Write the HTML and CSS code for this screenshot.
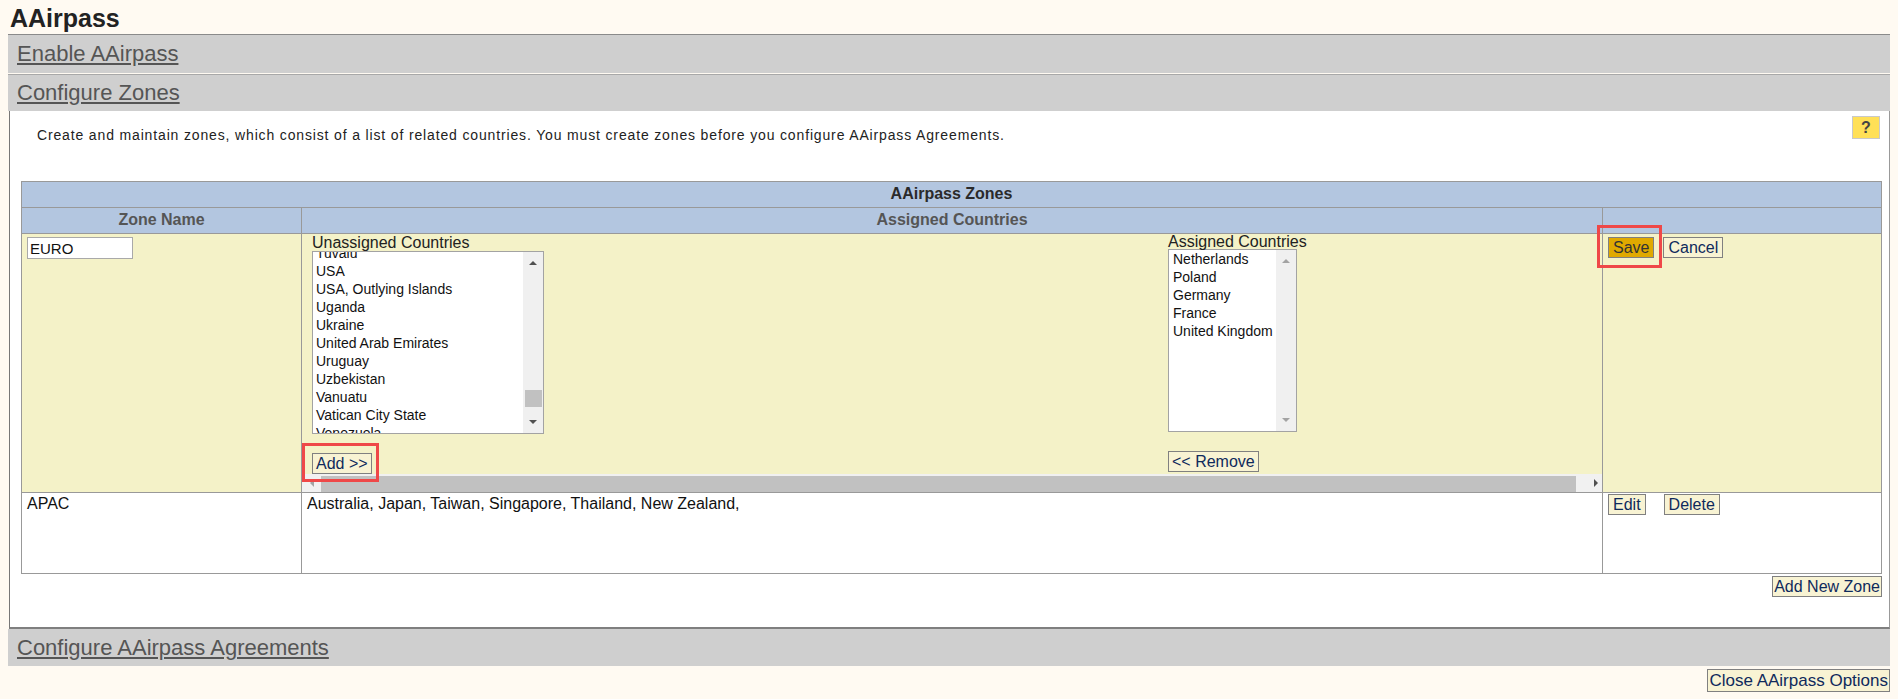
FILE: index.html
```html
<!DOCTYPE html>
<html lang="en">
<head>
<meta charset="utf-8">
<title>AAirpass</title>
<link rel="stylesheet" href="styles.css">
</head>
<body>
<h1 class="title">AAirpass</h1>
<div class="bar"><a class="bar-link" href="#">Enable AAirpass</a></div>
<div class="bar bar-second"><a class="bar-link" href="#">Configure Zones</a></div>
<div class="panel">
  <div class="intro">
    <p class="intro-text">Create and maintain zones, which consist of a list of related countries. You must create zones before you configure AAirpass Agreements.</p>
    <button class="help" type="button">?</button>
  </div>
  <table class="zones">
    <colgroup><col class="col-name"><col class="col-countries"><col class="col-actions"></colgroup>
    <thead>
      <tr class="head-main"><th colspan="3">AAirpass Zones</th></tr>
      <tr class="head-sub"><th>Zone Name</th><th>Assigned Countries</th><th></th></tr>
    </thead>
    <tbody>
      <tr class="row-edit">
        <td class="cell-name"><input class="zone-input" type="text" value="EURO"></td>
        <td class="cell-countries">
          <div class="edit-wrap">
            <div class="picker">
              <div class="pick-group pick-unassigned">
                <div class="pick-label">Unassigned Countries</div>
                <div class="listbox box-unassigned">
                  <div class="list-items list-scrolled">
                    <div class="item">Tuvalu</div>
                    <div class="item">USA</div>
                    <div class="item">USA, Outlying Islands</div>
                    <div class="item">Uganda</div>
                    <div class="item">Ukraine</div>
                    <div class="item">United Arab Emirates</div>
                    <div class="item">Uruguay</div>
                    <div class="item">Uzbekistan</div>
                    <div class="item">Vanuatu</div>
                    <div class="item">Vatican City State</div>
                    <div class="item">Venezuela</div>
                  </div>
                  <div class="vscroll">
                    <div class="arrow-box"><span class="tri-up"></span></div>
                    <div class="vtrack"><div class="vthumb"></div></div>
                    <div class="arrow-box"><span class="tri-down"></span></div>
                  </div>
                </div>
                <span class="annot annot-add"><button class="btn btn-pick" type="button">Add &gt;&gt;</button></span>
              </div>
              <div class="pick-group pick-assigned">
                <div class="pick-label label-assigned">Assigned Countries</div>
                <div class="listbox box-assigned">
                  <div class="list-items list-assigned">
                    <div class="item">Netherlands</div>
                    <div class="item">Poland</div>
                    <div class="item">Germany</div>
                    <div class="item">France</div>
                    <div class="item">United Kingdom</div>
                  </div>
                  <div class="vscroll vscroll-disabled">
                    <div class="arrow-box"><span class="tri-up"></span></div>
                    <div class="vtrack"></div>
                    <div class="arrow-box"><span class="tri-down"></span></div>
                  </div>
                </div>
                <button class="btn btn-pick" type="button">&lt;&lt; Remove</button>
              </div>
            </div>
            <div class="hscroll">
              <div class="harrow harrow-left"><span class="tri-left"></span></div>
              <div class="hthumb"></div>
              <div class="harrow harrow-right"><span class="tri-right"></span></div>
            </div>
          </div>
        </td>
        <td class="cell-actions">
          <span class="annot annot-save"><button class="btn btn-save" type="button">Save</button></span><button class="btn btn-cancel" type="button">Cancel</button>
        </td>
      </tr>
      <tr class="row-view">
        <td class="cell-text">APAC</td>
        <td class="cell-text">Australia, Japan, Taiwan, Singapore, Thailand, New Zealand,</td>
        <td class="cell-actions cell-actions-view">
          <button class="btn" type="button">Edit</button><button class="btn btn-delete" type="button">Delete</button>
        </td>
      </tr>
    </tbody>
  </table>
  <div class="table-foot"><button class="btn btn-tight" type="button">Add New Zone</button></div>
</div>
<div class="bar bar-last"><a class="bar-link" href="#">Configure AAirpass Agreements</a></div>
<div class="page-foot"><button class="btn btn-close" type="button">Close AAirpass Options</button></div>
</body>
</html>
```
FILE: styles.css
```css
html, body {
  margin: 0;
}
body {
  background: #fffaf2;
  font-family: "Liberation Sans", Arial, sans-serif;
  color: #222;
  padding: 0 8px;
}
.title {
  margin: 0;
  height: 32px;
  padding: 2px 0 0 2px;
  font-size: 25px;
  line-height: 32px;
  font-weight: bold;
  color: #222;
}
.bar {
  border-top: 1px solid #8a8a8a;
  background: #cfcfcf;
  height: 38px;
  line-height: 38px;
  padding-left: 9px;
}
.bar-second {
  margin-top: 1px;
  border-top-color: #a8a8a8;
  height: 36px;
  line-height: 36px;
}
.bar-last {
  border-top: none;
  height: 37px;
  line-height: 37px;
}
.bar-link {
  font-size: 22px;
  color: #555;
  text-decoration: underline;
}
.panel {
  margin-left: 1px;
  background: #fff;
  border-left: 1px solid #777;
  border-right: 1px solid #999;
  border-bottom: 2px solid #7f7f7f;
  padding: 0 7px 30px 11px;
}
.intro {
  display: flex;
  justify-content: space-between;
  align-items: flex-start;
  height: 65px;
  padding: 5px 2px 0 16px;
}
.intro-text {
  margin: 0;
  padding-top: 10px;
  font-size: 14px;
  line-height: 18px;
  letter-spacing: 0.85px;
  color: #222;
}
.help {
  width: 28px;
  height: 23px;
  padding: 0;
  margin: 0;
  background: #ffe057;
  border: 1px solid #c9c9c9;
  font-family: inherit;
  font-size: 16px;
  font-weight: bold;
  color: #444;
  line-height: 20px;
}
.zones {
  width: 100%;
  border-collapse: collapse;
  table-layout: fixed;
  border: 1px solid #999;
}
.col-name { width: 280px; }
.col-countries { width: 1301px; }
.zones th, .zones td {
  border: 1px solid #999;
  padding: 0;
  vertical-align: top;
}
.zones th {
  background: #b3c6e0;
  font-size: 16px;
  font-weight: bold;
  height: 25px;
  line-height: 24px;
  text-align: center;
}
.head-main th { color: #2a2a2a; }
.head-sub th { color: #555; }
.row-edit td { background: #f4f2c8; }
.row-edit { height: 259px; }
.row-view { height: 81px; }
.cell-name {
  padding: 3px 0 0 5px !important;
}
.zone-input {
  box-sizing: border-box;
  width: 106px;
  height: 22px;
  margin: 0;
  padding: 0 2px;
  border: 1px solid #a9a9a9;
  background: #fff;
  font-family: inherit;
  font-size: 15px;
  color: #111;
}
.edit-wrap {
  height: 258px;
  display: flex;
  flex-direction: column;
}
.picker {
  flex: 1;
  display: flex;
  padding-left: 10px;
}
.pick-unassigned {
  width: 856px;
}
.pick-label {
  font-size: 16px;
  line-height: 17px;
  color: #222;
  white-space: nowrap;
}
.label-assigned {
  line-height: 15px;
}
.listbox {
  display: flex;
  box-sizing: border-box;
  height: 183px;
  border: 1px solid #a3a3a3;
  background: #fff;
  margin-bottom: 19px;
}
.box-unassigned { width: 232px; }
.box-assigned { width: 129px; }
.list-items {
  flex: 1;
  overflow: hidden;
  padding-left: 3px;
  font-size: 14px;
  line-height: 18px;
  color: #111;
  white-space: nowrap;
}
.list-assigned { padding-left: 4px; }
.list-scrolled .item:first-child {
  margin-top: -8px;
}
.vscroll {
  width: 20px;
  background: #f0f0f0;
  display: flex;
  flex-direction: column;
}
.arrow-box {
  height: 22px;
  display: flex;
  align-items: center;
  justify-content: center;
}
.vtrack {
  flex: 1;
  padding: 0 1px 0 2px;
}
.vthumb {
  margin-top: 116px;
  height: 17px;
  background: #c1c1c1;
}
.tri-up, .tri-down, .tri-left, .tri-right {
  width: 0;
  height: 0;
  display: block;
}
.tri-up {
  border-left: 4px solid transparent;
  border-right: 4px solid transparent;
  border-bottom: 4px solid #505050;
}
.tri-down {
  border-left: 4px solid transparent;
  border-right: 4px solid transparent;
  border-top: 4px solid #505050;
}
.vscroll-disabled .tri-up { border-bottom-color: #a3a3a3; }
.vscroll-disabled .tri-down { border-top-color: #a3a3a3; }
.tri-left {
  border-top: 4px solid transparent;
  border-bottom: 4px solid transparent;
  border-right: 4px solid #a3a3a3;
}
.tri-right {
  border-top: 4px solid transparent;
  border-bottom: 4px solid transparent;
  border-left: 4px solid #505050;
}
.hscroll {
  height: 19px;
  display: flex;
  background: #f1f1f1;
}
.harrow {
  display: flex;
  align-items: center;
}
.harrow-left {
  width: 19px;
  justify-content: center;
}
.harrow-right {
  width: 26px;
  justify-content: flex-end;
  padding-right: 4px;
  box-sizing: border-box;
}
.hthumb {
  flex: 1;
  margin-top: 2px;
  background: #c1c1c1;
}
.btn {
  box-sizing: border-box;
  height: 21px;
  margin: 0;
  padding: 0 4px;
  background: #f8f3d3;
  border: 1px solid #808080;
  border-radius: 0;
  font-family: inherit;
  font-size: 16px;
  line-height: 18px;
  color: #0f2a5c;
  vertical-align: top;
}
.btn-pick { padding: 0 3px; }
.btn-tight { padding: 0 1px; }
.btn-save {
  background: #e0a900;
  color: #333;
}
.btn-cancel { margin-left: 9px; }
.btn-delete { margin-left: 18px; }
.annot {
  position: relative;
  display: inline-flex;
  vertical-align: top;
}
.annot::after {
  content: "";
  position: absolute;
  border: 3px solid #ef4848;
  pointer-events: none;
}
.annot-save::after {
  left: -11px;
  right: -8px;
  top: -12px;
  bottom: -10px;
}
.annot-add::after {
  left: -10px;
  right: -7px;
  top: -10px;
  bottom: -8px;
}
.cell-actions {
  padding: 3px 0 0 5px !important;
}
.cell-actions-view {
  padding-top: 1px !important;
}
.cell-text {
  padding: 2px 0 0 5px !important;
  font-size: 16px;
  line-height: 18px;
  color: #111;
  background: #fff;
}
.table-foot {
  text-align: right;
  padding-top: 2px;
}
.page-foot {
  text-align: right;
  padding-top: 3px;
}
.btn-close {
  height: 23px;
  font-size: 17px;
  padding: 0 1px;
}
```
